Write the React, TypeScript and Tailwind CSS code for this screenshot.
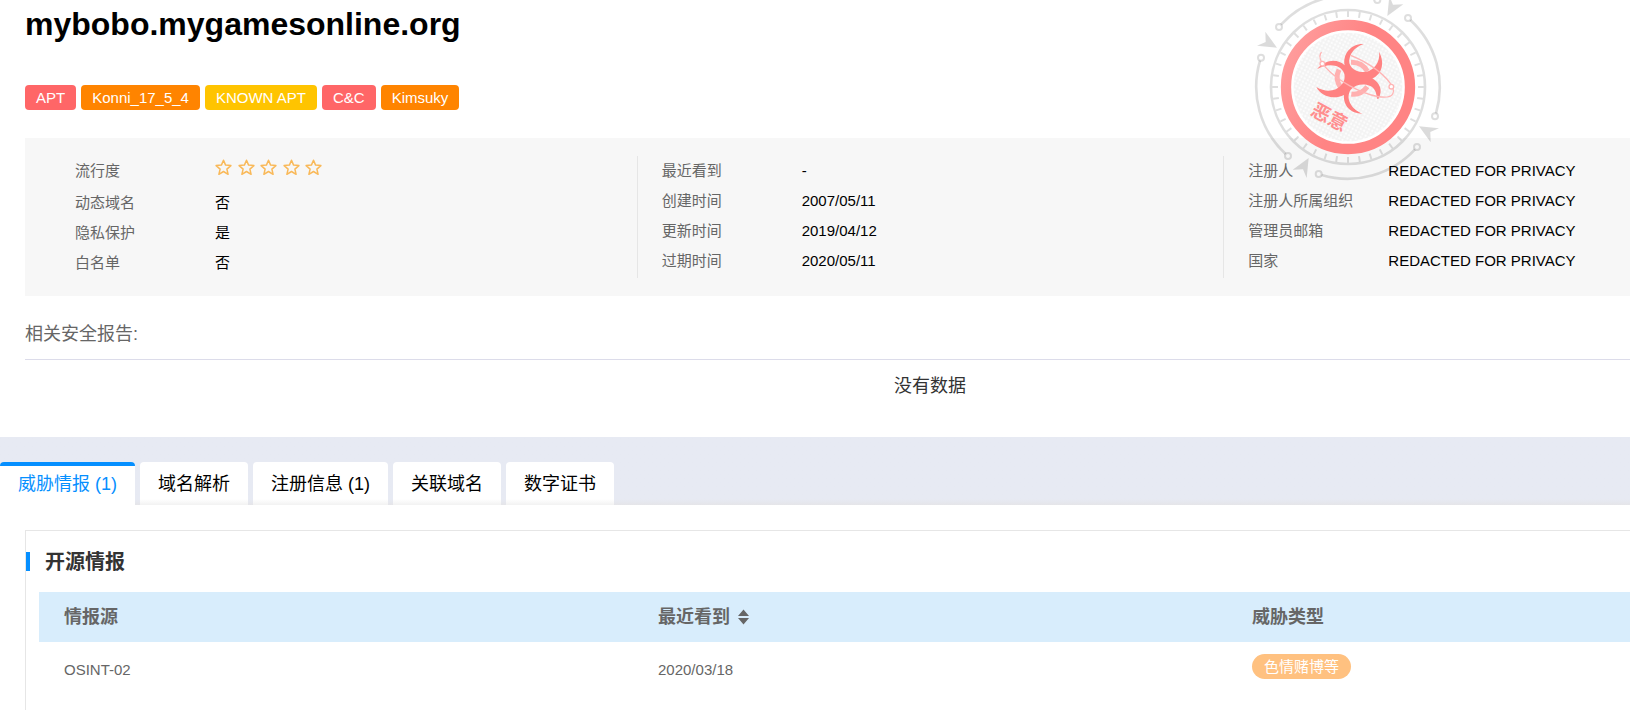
import { useState } from "react";
import type { FC } from "react";

type Field = { label: string; value: string };

const tags = [
  { text: "APT", className: "bg-[#ff6667]" },
  { text: "Konni_17_5_4", className: "bg-[#ff8400]" },
  { text: "KNOWN APT", className: "bg-[#ffc400]" },
  { text: "C&C", className: "bg-[#ff6667]" },
  { text: "Kimsuky", className: "bg-[#ff8400]" },
];

const domainFields: Field[] = [
  { label: "动态域名", value: "否" },
  { label: "隐私保护", value: "是" },
  { label: "白名单", value: "否" },
];

const timeFields: Field[] = [
  { label: "最近看到", value: "-" },
  { label: "创建时间", value: "2007/05/11" },
  { label: "更新时间", value: "2019/04/12" },
  { label: "过期时间", value: "2020/05/11" },
];

const ownerFields: Field[] = [
  { label: "注册人", value: "REDACTED FOR PRIVACY" },
  { label: "注册人所属组织", value: "REDACTED FOR PRIVACY" },
  { label: "管理员邮箱", value: "REDACTED FOR PRIVACY" },
  { label: "国家", value: "REDACTED FOR PRIVACY" },
];

const tabs = ["威胁情报 (1)", "域名解析", "注册信息 (1)", "关联域名", "数字证书"];

const FieldRow: FC<Field> = ({ label, value }) => (
  <div className="flex">
    <dt className="w-[140px] shrink-0 text-[#666]">{label}</dt>
    <dd>{value}</dd>
  </div>
);

const Star = () => (
  <svg viewBox="0 0 17 17" className="size-[17px]" aria-hidden="true">
    <path
      d="M8.5 1.2l2.1 4.9 5.3.5-4 3.5 1.2 5.2-4.6-2.8-4.6 2.8 1.2-5.2-4-3.5 5.3-.5z"
      fill="none"
      stroke="#f9b959"
      strokeWidth="1.5"
      strokeLinejoin="round"
    />
  </svg>
);

// Round stamp with the verdict, three drawing units per pixel
const VerdictSeal = () => (
  <svg
    viewBox="-300 -300 600 600"
    className="pointer-events-none absolute -top-[151px] left-[1223px] size-[200px]"
    role="img"
    aria-label="恶意"
  >
    <defs>
      <pattern id="dots" width="11" height="11" patternUnits="userSpaceOnUse" patternTransform="rotate(28)">
        <rect width="11" height="11" fill="#f3f3f3" />
        <circle cx="5" cy="5" r="3.6" fill="#fdfdfd" />
      </pattern>
      <linearGradient id="ring" x1="0" y1="0" x2="1" y2="0.4">
        <stop offset="0" stopColor="#ffa0a0" />
        <stop offset="0.6" stopColor="#ff8484" />
        <stop offset="1" stopColor="#ff8484" />
      </linearGradient>
    </defs>

    {[0, 90, 180, 270].map((angle) => (
      <g key={angle} transform={`rotate(${angle})`} stroke="#000" strokeOpacity="0.13" fill="none">
        <path d="M-201 -187A275 275 0 0 1 79 -264" strokeWidth="8" />
        <circle cx="-207" cy="-180" r="9" strokeWidth="6" />
        <circle cx="88" cy="-261" r="9" strokeWidth="6" />
        <path d="M-213 -118l-35 -48 1 31-26 11z" fill="#000" fillOpacity="0.14" stroke="none" />
      </g>
    ))}

    <circle r="231" fill="none" stroke="#000" strokeOpacity="0.13" strokeWidth="8" />
    {Array.from({ length: 40 }, (_, i) => (
      <path key={i} d="M0 210v17" stroke="#000" strokeOpacity="0.13" strokeWidth="6" transform={`rotate(${i * 9})`} />
    ))}

    <circle r="186" fill="#fff" stroke="url(#ring)" strokeWidth="31" />
    <circle r="163" fill="url(#dots)" />

    <g transform="translate(-130 -157)">
      <g fill="none" stroke="#ffb0b0" strokeWidth="15">
        <path d="M139 83Q172 82 188 110" />
        <path d="M103 105Q90 132 107 157" />
        <path d="M140 178Q168 182 188 156" />
      </g>
      <path
        d="M177 28C140 26 113 58 120 92C98 70 60 75 37 104C70 84 108 90 118 115C130 150 84 187 35 157C48 184 86 197 118 181C115 212 138 237 173 237C138 222 122 190 138 165C155 144 196 145 208 163C219 178 214 195 221 193C236 168 226 145 203 131C231 120 242 86 223 51C228 84 205 112 175 112C145 112 128 90 135 70C140 49 156 36 177 28Z"
        fill="#ff8282"
      />
    </g>

    <g fill="none" stroke="#ffb4b4" strokeWidth="4">
      <ellipse cx="26" cy="-40" rx="124" ry="42" transform="rotate(29 26 -40)" strokeDasharray="282 90 400" />
      <circle cx="-77" cy="-70" r="7" fill="#fff" />
      <circle cx="130" cy="-1" r="7" fill="#fff" />
    </g>

    <text
      transform="translate(-56 91) rotate(28)"
      textAnchor="middle"
      dominantBaseline="central"
      fontSize="57"
      fontWeight="700"
      fill="#ff8f8f"
    >
      恶意
    </text>
  </svg>
);

const ThreatTable = () => (
  <table className="w-full table-fixed text-left">
    <thead className="h-[50px] bg-[#d8edfc] text-lg text-[#666]">
      <tr>
        <th className="px-[25px]">情报源</th>
        <th className="px-[25px]">
          <button type="button" className="flex items-center gap-2 font-bold">
            最近看到
            <svg viewBox="0 0 11 16" className="h-4 w-[11px]" fill="#666" aria-hidden="true">
              <path d="M5.5 0.5L11 7H0zM5.5 15.5L11 9H0z" />
            </svg>
          </button>
        </th>
        <th className="px-[25px]">威胁类型</th>
      </tr>
    </thead>
    <tbody className="text-[15px] text-[#666]">
      <tr className="h-14">
        <td className="px-[25px]">OSINT-02</td>
        <td className="px-[25px]">2020/03/18</td>
        <td className="px-[25px] pt-3 align-top">
          <span className="block w-fit rounded-full bg-[#ffc180] px-3 leading-[25px] text-white">
            色情赌博等
          </span>
        </td>
      </tr>
    </tbody>
  </table>
);

export default function App() {
  const [activeTab, setActiveTab] = useState(0);

  return (
    <div className="h-screen overflow-hidden bg-white font-['Liberation_Sans','Noto_Sans_CJK_SC',sans-serif] text-black">
      <div className="flex min-h-full min-w-[1860px] flex-col">
        <header className="px-[25px] pt-1">
          <h1 className="text-[32px] leading-[41px] font-bold">mybobo.mygamesonline.org</h1>

          <ul className="mt-10 flex gap-[5px] text-[15px] leading-[25px] text-white">
            {tags.map((tag) => (
              <li key={tag.text} className={`rounded px-[11px] ${tag.className}`}>
                {tag.text}
              </li>
            ))}
          </ul>

          <section className="relative mt-7 bg-[#f7f7f7] px-[25px] py-[18px] text-[15px] leading-[30px]">
            <VerdictSeal />
            <div className="relative grid grid-cols-3">
              <dl className="px-[25px]">
                <div className="flex h-8">
                  <dt className="w-[140px] text-[#666]">流行度</dt>
                  <dd className="flex h-[22px] w-[107px] items-center justify-between" aria-label="0 / 5">
                    {[1, 2, 3, 4, 5].map((n) => (
                      <Star key={n} />
                    ))}
                  </dd>
                </div>
                {domainFields.map((field) => (
                  <FieldRow key={field.label} {...field} />
                ))}
              </dl>
              <dl className="border-l border-[#e6e6e6] px-6">
                {timeFields.map((field) => (
                  <FieldRow key={field.label} {...field} />
                ))}
              </dl>
              <dl className="border-l border-[#e6e6e6] px-6">
                {ownerFields.map((field) => (
                  <FieldRow key={field.label} {...field} />
                ))}
              </dl>
            </div>
          </section>

          <section className="pt-[25px] text-lg">
            <h2 className="border-b border-[#dcdcea] pb-[11px] leading-[27px] text-[#666]">相关安全报告:</h2>
            <p className="pt-3 pb-[37px] text-center leading-7 text-[#333]">没有数据</p>
          </section>
        </header>

        <nav className="flex gap-[5px] bg-[#e7eaf3] bg-linear-to-t from-[#e5e5e9] to-[#e7eaf3] to-[6px] pt-[25px] text-lg" role="tablist">
          {tabs.map((tab, i) => (
            <button
              key={tab}
              type="button"
              role="tab"
              aria-selected={i === activeTab}
              onClick={() => setActiveTab(i)}
              className={`h-[43px] rounded-t border-t-4 px-[18px] pb-1 ${
                i === activeTab
                  ? "border-[#058fff] bg-white text-[#058fff]"
                  : "border-white bg-linear-to-t from-[#f2f2f2] to-white to-[6px]"
              }`}
            >
              {tab}
            </button>
          ))}
        </nav>

        <main className="flex flex-1 flex-col px-[25px] pt-[25px]">
          <section className="flex-1 border border-b-0 border-[#e6e6e6]">
            <div className="flex h-[61px] items-center gap-[15px]">
              <span className="h-[19px] w-1 bg-[#058fff]" />
              <h2 className="text-xl font-bold text-[#333]">开源情报</h2>
            </div>
            <div className="px-[13px]">
              <ThreatTable />
            </div>
          </section>
        </main>
      </div>
    </div>
  );
}
